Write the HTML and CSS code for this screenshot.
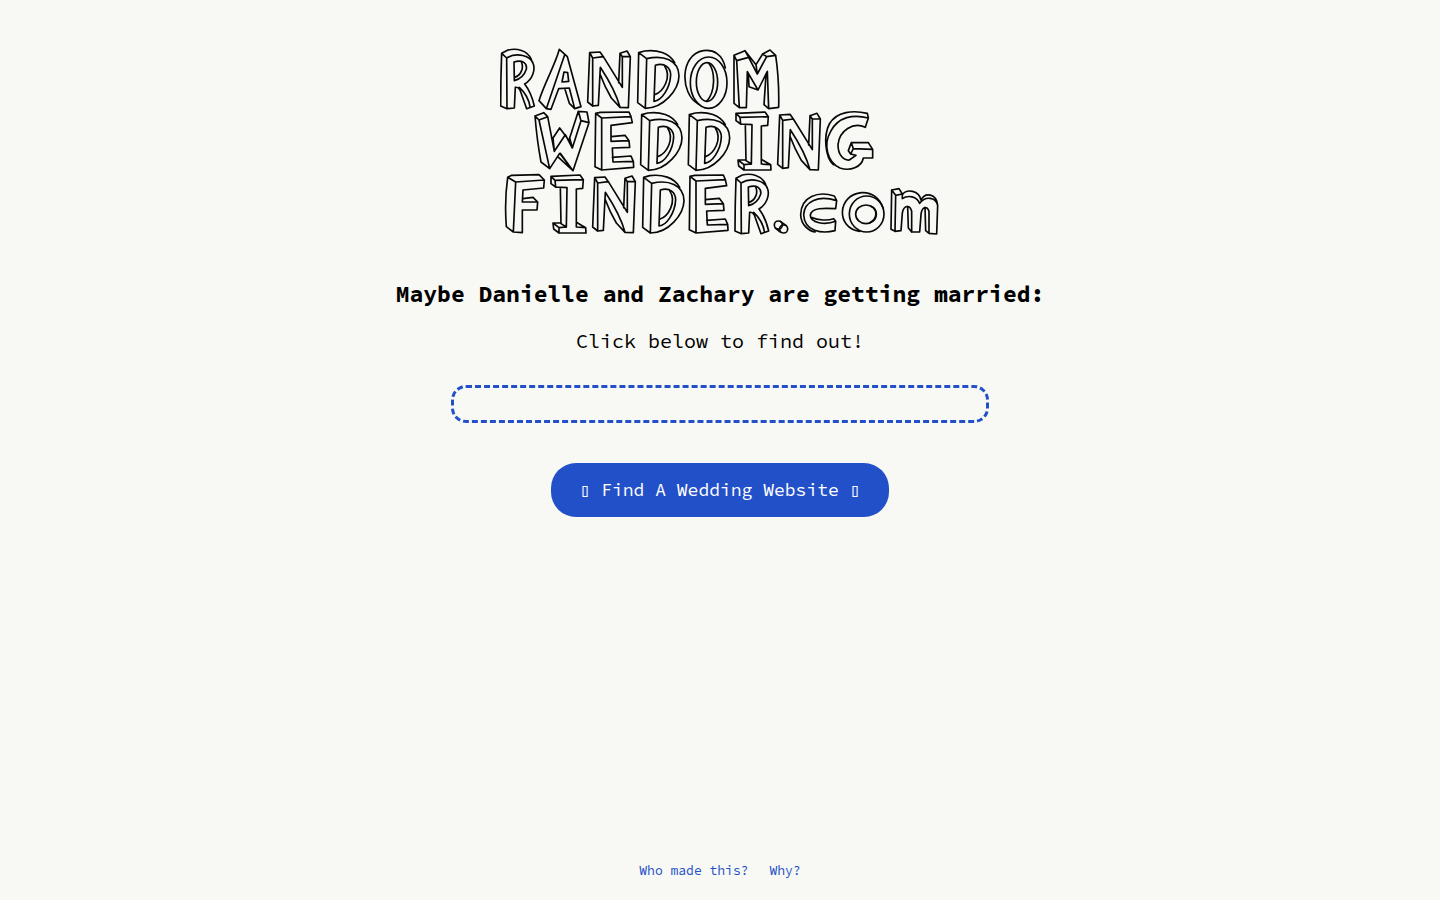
FILE: index.html
```html
<!DOCTYPE html>
<html lang="en">
<head>
<meta charset="utf-8">
<title>Random Wedding Finder</title>
<meta name="viewport" content="width=device-width, initial-scale=1">
<link rel="stylesheet" href="styles.css">
</head>
<body>
<main class="page">
  <svg class="logo" viewBox="500 48 440 188" role="img" aria-label="Random Wedding Finder .com">
    <defs>
      <path id="r" d="M50 54L51 206L73 204L76 142Q84 140 90 150L110 206L133 198Q124 158 104 132C128 118 136 90 130 72C122 46 80 36 50 54ZM35 40Q32 120 32 198L51 206M50 54L35 40L54 30C80 24 112 30 124 58M72 66C98 58 112 70 109 88C103 106 90 118 73 122ZM94 66C102 82 94 106 74 112M88 142C104 156 118 180 120 200"/>
      <path id="n" d="M308 54L340 50L397 142L397 50L421 50L415 203L390 202Q376 150 331 82L325 196L308 198ZM308 54L299 38L293 186L308 198M299 38L330 36L340 50M397 50L390 40L411 33L421 50M390 40L386 128M330 102Q344 140 364 174L390 202"/>
      <path id="d" d="M26 38L23 188L46 205L50 56ZM50 56C100 44 146 60 147 108C146 150 100 205 46 205M26 38L44 33C80 28 118 38 134 68M76 76C105 66 122 85 122 105C120 145 95 182 72 184ZM74 164C100 155 126 112 104 78"/>
      <path id="e" d="M212 28L210 188L230 198L230 42ZM212 28L226 25L312 24L318 38L230 42M318 38L322 56L258 64L258 112L312 110L314 130L262 132L264 174L325 172L326 190L230 198M258 98L300 94L312 110M262 160L318 156L325 172"/>
      <path id="i" d="M180 40L265 38L263 64L244 66L244 180L272 182L273 198L192 198L192 182L214 180L216 62L182 60ZM180 40L168 28L255 24L265 38M168 28L168 50L182 60M196 62L198 170L214 180M198 168L174 168L192 182M174 168L176 186L192 198M244 166L272 182"/>
    </defs>
    <g transform="translate(490 40) scale(.33333)">
      <use href="#r"/>
      <path d="M224 44L169 206L183 208L206 146L238 144L254 206L273 200L232 50L208 28C196 74 164 128 147 182L169 206M222 96L233 98L236 124L216 126ZM224 145L238 190L254 206"/>
      <use href="#n"/>
    </g>
    <g transform="translate(630 40) scale(.33333)">
      <use href="#d"/>
      <ellipse cx="236" cy="128" rx="55" ry="77"/>
      <ellipse cx="231" cy="126" rx="32" ry="58"/>
      <path d="M236 69C257 96 256 156 230 184M205 192C150 162 148 44 220 32C250 28 278 42 286 84M320 62L356 52L382 102L410 50L437 46Q448 120 446 202L416 206L412 94L384 150L352 95L349 203L328 203ZM328 203L312 190L312 46L320 62M312 46L345 32L356 52M345 32L378 74L398 42L420 30L437 46M398 42L410 50M378 74L382 102M355 102L357 140L384 150M408 104L402 194L416 206"/>
    </g>
    <g transform="translate(525 104) scale(.33333)">
      <path d="M42 48L68 38L88 142L121 92L142 132L168 50L192 56L144 200L104 148L74 194ZM42 48L30 36Q36 110 48 174L74 194M30 36L56 26L68 38M168 50L160 22L186 24L192 56M160 22L134 102L142 132M88 142L84 102L104 72L134 112M104 148L98 158L144 200M106 148L144 200"/>
      <use href="#e"/>
      <use href="#d" x="324" y="-6"/>
    </g>
    <g transform="translate(680 104) scale(.33333)">
      <use href="#d" x="2" y="-6"/>
      <use href="#i"/>
      <use href="#n" y="-5"/>
      <path d="M565 42L556 70C520 52 478 80 474 122C474 152 490 170 508 168L528 154L512 150L520 134L578 136L578 162L550 162C545 190 510 202 480 192C440 175 430 120 452 82C475 38 520 30 565 42L562 28C520 18 470 22 448 60C430 95 435 160 460 182M578 136L565 116L514 116L505 140L512 150M514 116L520 134"/>
    </g>
    <g transform="translate(495 168) scale(.33333)">
      <path d="M38 28L62 42L55 192L34 176Q28 100 38 28ZM38 28L50 22L132 20L148 36L62 42M148 36L146 60L84 66L82 102L128 102L126 126L82 126L82 194L55 192M84 92L114 88L128 102"/>
      <use href="#i" y="-3"/>
      <use href="#n" y="-9"/>
    </g>
    <g transform="translate(635 168) scale(.33333)">
      <use href="#d" y="-10"/>
      <use href="#e" x="-47" y="-3"/>
      <use href="#r" x="268" y="-9"/>
    </g>
    <g transform="translate(765 168) scale(.33333)">
      <circle cx="40" cy="171" r="12"/>
      <circle cx="56" cy="183" r="12"/>
      <path d="M46 160L64 173M31 180L46 192"/>
      <path d="M215 98C160 80 118 100 116 140C118 190 170 198 210 188L212 160C180 172 136 165 136 142C138 118 180 120 212 122ZM215 98L208 84C160 68 108 85 107 140C108 170 130 188 150 192M138 148C160 158 190 158 206 152L212 160"/>
      <ellipse cx="305" cy="138" rx="52" ry="54"/>
      <ellipse cx="303" cy="139" rx="31" ry="28"/>
      <path d="M318 115C340 125 336 155 314 164M284 190C212 180 216 80 290 74C320 72 345 90 354 120M392 82L412 78L412 92C430 80 455 85 464 106C480 84 512 86 518 112L515 198L492 196L492 130C485 110 470 118 468 140L464 192L440 192L440 130C434 108 416 112 412 135L408 188L390 190ZM392 82L380 66L378 184L390 190M380 66L402 62L412 78M412 80C425 62 462 66 468 96C480 72 514 76 518 112M428 116L430 180L440 192M480 118L482 188L492 196"/>
    </g>
  </svg>
  <h1 class="title">Maybe Danielle and Zachary are getting married:</h1>
  <p class="hint">Click below to find out!</p>
  <div class="result" aria-live="polite"></div>
  <button class="find" type="button">▯ Find A Wedding Website ▯</button>
  <footer class="footer">
    <a href="#who">Who made this?</a>
    <a href="#why">Why?</a>
  </footer>
</main>
</body>
</html>
```
FILE: styles.css
```css
* {
  box-sizing: border-box;
}

body {
  margin: 0;
  background: #f8f9f4;
  color: #000;
  font-family: "Source Code Pro", monospace;
}

.page {
  display: flex;
  flex-direction: column;
  align-items: center;
  min-height: 100vh;
  padding: 48px 24px 19px;
  text-align: center;
}

.logo {
  width: 440px;
  max-width: 100%;
  fill: none;
  stroke: #080808;
  stroke-width: 5;
  stroke-linejoin: round;
  stroke-linecap: round;
}

.title {
  margin: 40px 0 0;
  font-size: 23px;
  line-height: 36px;
}

.hint {
  margin: 13px 0 0;
  font-size: 20px;
  line-height: 32px;
}

.result {
  width: 538px;
  max-width: 100%;
  min-height: 38px;
  margin-top: 28px;
  border: 3px dashed #2250c8;
  border-radius: 15px;
}

.find {
  margin-top: 40px;
  padding: 11px 29px;
  border: 0;
  border-radius: 25px;
  background: #2250c8;
  color: #fff;
  font-family: inherit;
  font-size: 18px;
  line-height: 32px;
  cursor: pointer;
}

.footer {
  display: flex;
  gap: 21px;
  margin-top: auto;
  font-size: 13px;
  line-height: 20px;
}

.footer a {
  color: #2250c8;
  text-decoration: none;
}
```
